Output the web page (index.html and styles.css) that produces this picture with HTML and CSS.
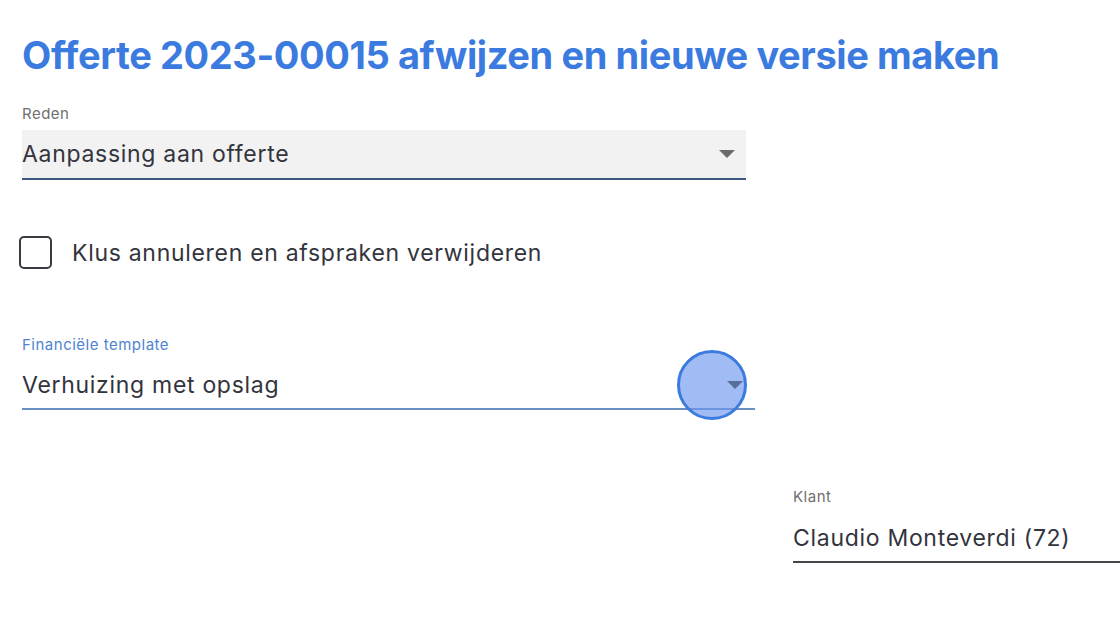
FILE: index.html
```html
<!DOCTYPE html>
<html lang="nl">
<head>
<meta charset="utf-8">
<title>Offerte afwijzen</title>
<link rel="stylesheet" href="styles.css">
</head>
<body>
<main class="dialog">
  <h1 class="title">Offerte 2023-00015 afwijzen en nieuwe versie maken</h1>

  <div class="field field-filled">
    <label class="field-label">Reden</label>
    <div class="select select-filled">
      <span class="select-value">Aanpassing aan offerte</span>
      <span class="caret"></span>
    </div>
  </div>

  <label class="check">
    <span class="check-box"></span>
    <span class="check-text">Klus annuleren en afspraken verwijderen</span>
  </label>

  <div class="field field-focus">
    <label class="field-label label-focus">Financiële template</label>
    <div class="select select-line">
      <span class="select-value">Verhuizing met opslag</span>
      <span class="caret-wrap">
        <span class="click-marker"></span>
        <span class="caret caret-dim"></span>
      </span>
    </div>
  </div>

  <div class="field field-client">
    <label class="field-label">Klant</label>
    <div class="select select-dark">
      <span class="select-value">Claudio Monteverdi (72)</span>
    </div>
  </div>
</main>
</body>
</html>
```
FILE: styles.css
```css
html, body {
  margin: 0;
  padding: 0;
  background: #ffffff;
  overflow: hidden;
}

body {
  width: 1120px;
  height: 618px;
  font-family: "Inter", "Open Sans", sans-serif;
  color: #33343d;
}

.dialog {
  display: flex;
  flex-direction: column;
  padding: 30px 0 0 22px;
}

.title {
  margin: 0;
  font-size: 38px;
  font-weight: 700;
  line-height: 50px;
  color: #3b7be0;
  letter-spacing: -0.4px;
}

.field {
  display: flex;
  flex-direction: column;
}

.field-label {
  font-size: 15px;
  line-height: 18px;
  letter-spacing: 0.5px;
  color: #6f6f6f;
}

.label-focus {
  color: #4f83d1;
}

.field-filled {
  margin-top: 25px;
  width: 724px;
}

.select {
  display: flex;
  align-items: center;
  justify-content: space-between;
  box-sizing: border-box;
  font-size: 23px;
  letter-spacing: 0.7px;
}

.select-filled {
  margin-top: 7px;
  height: 50px;
  background: #f2f2f2;
  border-bottom: 2px solid #3d5a80;
  padding-right: 11px;
}

.caret {
  width: 0;
  height: 0;
  border-left: 8px solid transparent;
  border-right: 8px solid transparent;
  border-top: 8px solid #6a6a6a;
}

.check {
  display: flex;
  align-items: center;
  gap: 20px;
  margin: 56px 0 0 -3px;
}

.check-box {
  width: 29px;
  height: 29px;
  border: 2px solid #3a3b42;
  border-radius: 5px;
}

.check-text {
  font-size: 23px;
  letter-spacing: 0.7px;
  color: #33343d;
}

.field-focus {
  margin-top: 67px;
  width: 733px;
}

.select-line {
  height: 56px;
  padding-top: 8px;
  border-bottom: 2px solid #6c8fc4;
  padding-right: 12px;
}

.caret-wrap {
  position: relative;
  display: flex;
  align-items: center;
}

.caret-dim {
  border-top-color: #5a6e9c;
  position: relative;
  z-index: 2;
}

/* click highlight drawn over the dropdown caret */
.click-marker {
  position: absolute;
  left: -50px;
  top: -31px;
  width: 64px;
  height: 64px;
  border-radius: 50%;
  background: rgba(110, 150, 240, 0.65);
  border: 3px solid #3b7be0;
  z-index: 1;
}

.field-client {
  margin: 78px 0 0 771px;
  width: 327px;
}

.select-dark {
  height: 57px;
  padding-top: 9px;
  border-bottom: 2px solid #45464c;
}
```
